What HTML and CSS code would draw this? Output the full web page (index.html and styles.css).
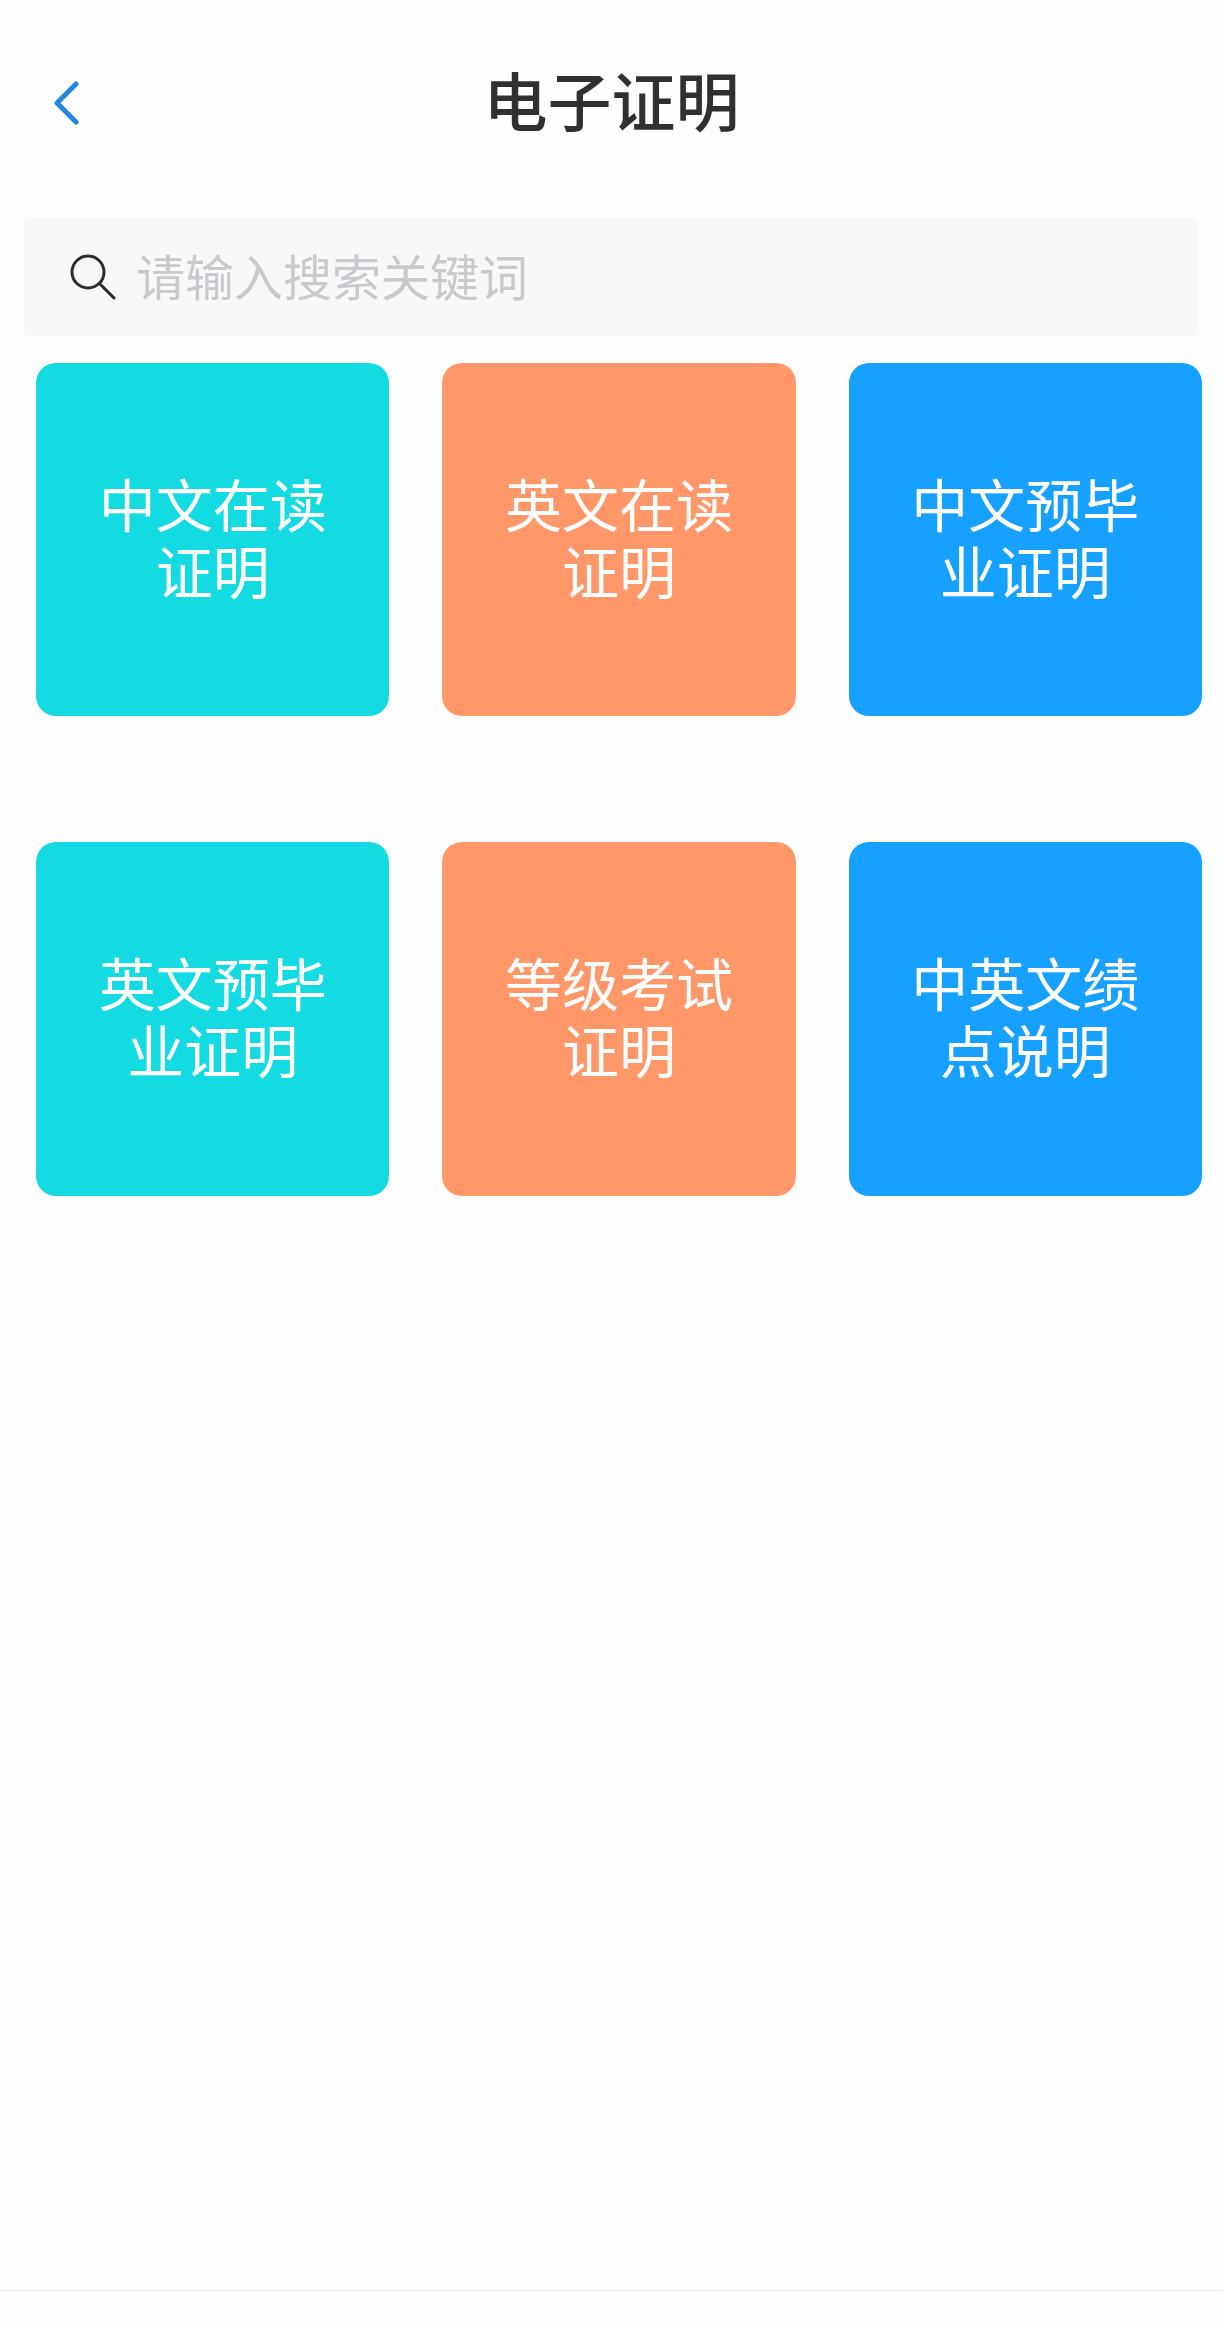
FILE: index.html
```html
<!DOCTYPE html>
<html lang="zh-CN">
<head>
<meta charset="utf-8">
<meta name="viewport" content="width=device-width, initial-scale=1">
<title>电子证明</title>
<link rel="stylesheet" href="styles.css">
</head>
<body>
<header class="topbar">
  <button class="back" type="button" aria-label="返回">
    <svg width="28" height="44" viewBox="0 0 28 44" aria-hidden="true"><path d="M24 3 5 22l19 19"/></svg>
  </button>
  <h1 class="title">电子证明</h1>
</header>
<main class="content">
  <form class="search" role="search">
    <label class="search-icon" for="keyword" aria-label="搜索">
      <svg width="46" height="46" viewBox="0 0 46 46" aria-hidden="true"><circle cx="18" cy="18" r="16"/><path d="M30 30 44 44"/></svg>
    </label>
    <input class="search-input" id="keyword" type="text" placeholder="请输入搜索关键词">
  </form>
  <nav class="grid">
    <a class="card teal" href="#">中文在读证明</a>
    <a class="card orange" href="#">英文在读证明</a>
    <a class="card blue" href="#">中文预毕业证明</a>
    <a class="card teal" href="#">英文预毕业证明</a>
    <a class="card orange" href="#">等级考试证明</a>
    <a class="card blue" href="#">中英文绩点说明</a>
  </nav>
</main>
<footer class="bottombar"></footer>
</body>
</html>
```
FILE: styles.css
```css
* {
  box-sizing: border-box;
}

body {
  margin: 0;
  min-height: 100vh;
  display: flex;
  flex-direction: column;
  background: #fefefe;
  font-family: "Noto Sans CJK SC", sans-serif;
}

.topbar {
  display: grid;
  grid-template-columns: 120px 1fr 120px;
  align-items: center;
  height: 206px;
}

.back {
  justify-self: start;
  display: flex;
  margin-left: 52px;
  padding: 0;
  border: 0;
  background: none;
}

.back path {
  fill: none;
  stroke: #2286e2;
  stroke-width: 5;
  stroke-linecap: round;
  stroke-linejoin: round;
}

.title {
  margin: 0;
  padding-bottom: 10px;
  color: #303030;
  font-size: 64px;
  font-weight: 500;
  line-height: 80px;
  text-align: center;
}

.content {
  flex: 1;
}

.search {
  display: flex;
  align-items: center;
  gap: 20px;
  height: 118px;
  margin: 12px 24px 0;
  padding: 0 46px;
  border-radius: 6px;
  background: #f7f8fa;
}

.search-icon {
  display: flex;
}

.search-icon svg {
  fill: none;
  stroke: #2c2c2c;
  stroke-width: 3;
  stroke-linecap: round;
}

.search-input {
  flex: 1;
  min-width: 0;
  padding: 0 0 4px;
  border: 0;
  outline: 0;
  background: none;
  color: #323233;
  font: inherit;
  font-size: 49px;
  line-height: 72px;
}

.search-input::placeholder {
  color: #c8c9cc;
  opacity: 1;
}

.grid {
  display: grid;
  grid-template-columns: repeat(3, 1fr);
  gap: 126px 53px;
  margin: 27px 21px 0 36px;
}

.card {
  display: flex;
  align-items: center;
  justify-content: center;
  aspect-ratio: 1;
  padding: 0 60px 8px;
  border-radius: 20px;
  color: #fff;
  font-size: 57px;
  line-height: 67px;
  text-align: center;
  text-decoration: none;
}

.teal {
  background: #14dae2;
}

.orange {
  background: #ff9768;
}

.blue {
  background: #16a0ff;
}

.bottombar {
  height: 39px;
  border-top: 1px solid #e6e6e6;
}
```
